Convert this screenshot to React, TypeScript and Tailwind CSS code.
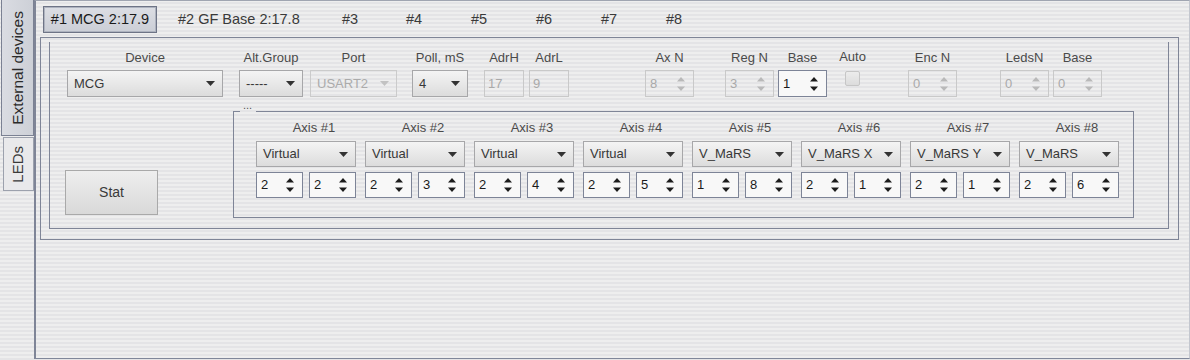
import clsx from 'clsx'
import type { ReactNode } from 'react'

const STRIPES =
  'bg-fixed bg-[image:repeating-linear-gradient(to_bottom,#eeeeee_0px,#eeeeee_2px,#e4e4e6_2px,#e4e4e6_4px)]'

const LINE = 'border-[#7f8597]'

type Axis = { kind: string; a: string; b: string }

const axes: Axis[] = [
  { kind: 'Virtual', a: '2', b: '2' },
  { kind: 'Virtual', a: '2', b: '3' },
  { kind: 'Virtual', a: '2', b: '4' },
  { kind: 'Virtual', a: '2', b: '5' },
  { kind: 'V_MaRS', a: '1', b: '8' },
  { kind: 'V_MaRS X', a: '2', b: '1' },
  { kind: 'V_MaRS Y', a: '2', b: '1' },
  { kind: 'V_MaRS', a: '2', b: '6' },
]

function DownArrow({ disabled }: { disabled?: boolean }) {
  return (
    <svg width="9" height="5" viewBox="0 0 9 5" className="shrink-0">
      <polygon points="0,0 9,0 4.5,5" fill={disabled ? '#c2c2c2' : '#333333'} />
    </svg>
  )
}

function SpinArrows({ disabled }: { disabled?: boolean }) {
  const fill = disabled ? '#b9b9b9' : '#1c1c1c'
  return (
    <svg width="8" height="14" viewBox="0 0 8 14" className="shrink-0">
      <polygon points="4,0 8,4.5 0,4.5" fill={fill} />
      <polygon points="0,9.5 8,9.5 4,14" fill={fill} />
    </svg>
  )
}

type BoxProps = { value: string; className?: string; disabled?: boolean }

function Combo({ value, className, disabled }: BoxProps) {
  return (
    <div
      className={clsx(
        'flex items-center justify-between border pl-[6px] pr-[7px] text-[13px]',
        disabled
          ? 'border-[#cbcbcb] text-[#ababab]'
          : 'border-[#a7a7a9] text-[#383838] bg-[image:linear-gradient(to_bottom,#f4f4f4,#dcdcdc)]',
        className,
      )}
    >
      <span className="whitespace-nowrap">{value}</span>
      <DownArrow disabled={disabled} />
    </div>
  )
}

function Spinner({ value, className, disabled }: BoxProps) {
  return (
    <div
      className={clsx(
        'flex items-center justify-between border pl-[4px] pr-[8px] text-[13px]',
        disabled ? 'border-[#c9c9c9] text-[#a9a9a9]' : 'border-[#7d8497] bg-[#f8f8f8] text-[#1a1a1a]',
        className,
      )}
    >
      <span>{value}</span>
      <SpinArrows disabled={disabled} />
    </div>
  )
}

function TextBox({ value, className }: BoxProps) {
  return (
    <div className={clsx('flex items-center border border-[#c9c9c9] pl-[3px] text-[13px] text-[#a9a9a9]', className)}>
      {value}
    </div>
  )
}

function Field({ label, className, children }: { label: string; className: string; children: ReactNode }) {
  return (
    <div className={clsx('flex shrink-0 flex-col items-center', className)}>
      <span className="h-[16px] whitespace-nowrap text-[13px] leading-[16px] text-[#4a4a4a]">{label}</span>
      <div className="mt-[4px] w-full">{children}</div>
    </div>
  )
}

function TopRow() {
  return (
    <div className="flex">
      <Field label="Device" className="ml-[17px] w-[156px]">
        <Combo value="MCG" className="h-[27px]" />
      </Field>
      <Field label="Alt.Group" className="ml-[16px] w-[64px]">
        <Combo value="-----" className="h-[27px]" />
      </Field>
      <Field label="Port" className="ml-[7px] w-[87px]">
        <Combo value="USART2" disabled className="h-[27px] pl-[4px]" />
      </Field>
      <Field label="Poll, mS" className="ml-[15px] w-[56px]">
        <Combo value="4" className="h-[27px]" />
      </Field>
      <Field label="AdrH" className="ml-[16px] w-[40px]">
        <TextBox value="17" className="h-[27px]" />
      </Field>
      <Field label="AdrL" className="ml-[5px] w-[40px]">
        <TextBox value="9" className="h-[27px]" />
      </Field>
      <Field label="Ax N" className="ml-[76px] w-[49px]">
        <Spinner value="8" disabled className="h-[27px]" />
      </Field>
      <Field label="Reg N" className="ml-[31px] w-[49px]">
        <Spinner value="3" disabled className="h-[27px]" />
      </Field>
      <Field label="Base" className="ml-[4px] w-[49px]">
        <Spinner value="1" className="h-[27px]" />
      </Field>
      <div className="ml-[18px] flex w-[15px] shrink-0 flex-col items-center">
        <span className="-mt-[1px] h-[17px] whitespace-nowrap text-[13px] leading-[16px] text-[#4a4a4a]">Auto</span>
        <div className="mt-[5px] h-[15px] w-[15px] rounded-[2px] border border-[#c6c6c6] bg-[image:linear-gradient(to_bottom,#ececec,#dcdcdc)]" />
      </div>
      <Field label="Enc N" className="ml-[48px] w-[49px]">
        <Spinner value="0" disabled className="h-[27px]" />
      </Field>
      <Field label="LedsN" className="ml-[43px] w-[49px]">
        <Spinner value="0" disabled className="h-[27px]" />
      </Field>
      <Field label="Base" className="ml-[4px] w-[49px]">
        <Spinner value="0" disabled className="h-[27px]" />
      </Field>
    </div>
  )
}

function AxisPanel() {
  return (
    <div className={clsx('relative ml-[75px] h-[107px] w-[901px] shrink-0 border pt-[8px] pl-[22px]', LINE)}>
      <span
        className={clsx(
          'absolute -top-[12px] left-[6px] h-[12px] w-[16px] pl-[3px] text-[11px] leading-[11px] text-[#555]',
          STRIPES,
        )}
      >
        ...
      </span>
      <div className="flex gap-[9px]">
        {axes.map((axis, i) => (
          <div key={i} className="flex w-[100px] shrink-0 flex-col">
            <span className="h-[16px] pl-[16px] text-center text-[13px] leading-[16px] text-[#4a4a4a]">
              Axis #{i + 1}
            </span>
            <Combo value={axis.kind} className="mt-[5px] h-[26px]" />
            <div className="mt-[5px] flex gap-[6px]">
              <Spinner value={axis.a} className="h-[26px] w-[47px]" />
              <Spinner value={axis.b} className="h-[26px] w-[47px]" />
            </div>
          </div>
        ))}
      </div>
    </div>
  )
}

export default function App() {
  return (
    <div className={clsx("flex h-[360px] w-[1190px] overflow-hidden font-['Liberation_Sans',Arial,sans-serif]", STRIPES)}>
      {/* vertical tabs */}
      <div className="flex w-[34px] shrink-0 flex-col">
        <div className="ml-[1px] flex h-[136px] w-[33px] items-center justify-center border-x border-b border-[#7b8193] bg-[image:linear-gradient(to_right,#dadce2,#cdd0d7)]">
          <span className="rotate-180 whitespace-nowrap text-[15.5px] text-[#2a2a2a] [writing-mode:vertical-rl]">
            External devices
          </span>
        </div>
        <div className="ml-[3px] mt-[1px] flex h-[54px] w-[31px] items-center justify-center border border-[#9ca1ad] bg-[#e9e9eb]">
          <span className="rotate-180 whitespace-nowrap text-[15px] text-[#3a3a3a] [writing-mode:vertical-rl]">LEDs</span>
        </div>
      </div>

      {/* main panel */}
      <div className="flex h-[359px] flex-1 flex-col border-y border-r border-l-2 border-t-[#a0a5b1] border-r-[#c3c7cf] border-b-[#80879a] border-l-[#7f8597]">
        <div className="flex h-[36px] items-start text-[14.5px] text-[#3a3a3a]">
          <div className="ml-[7px] mt-[5px] flex h-[27px] w-[114px] items-center justify-center border border-[#6e7486] bg-[image:linear-gradient(to_bottom,#dcdee4,#cbced6)] text-[#1a1a1a] shadow-[inset_0_0_0_1px_#aeb3bf]">
            #1 MCG 2:17.9
          </div>
          <span className="ml-[21px] mt-[5px] flex h-[27px] w-[164px] items-center whitespace-nowrap">#2 GF Base 2:17.8</span>
          <span className="mt-[5px] flex h-[27px] w-[64px] items-center">#3</span>
          <span className="mt-[5px] flex h-[27px] w-[65px] items-center">#4</span>
          <span className="mt-[5px] flex h-[27px] w-[65px] items-center">#5</span>
          <span className="mt-[5px] flex h-[27px] w-[65px] items-center">#6</span>
          <span className="mt-[5px] flex h-[27px] w-[65px] items-center">#7</span>
          <span className="mt-[5px] flex h-[27px] w-[65px] items-center">#8</span>
        </div>

        <div className={clsx('ml-[4px] h-[203px] w-[1139px] border', LINE)}>
          <div className={clsx('ml-[8px] mt-[4px] h-[187px] w-[1120px] border-x border-b pt-[8px]', LINE)}>
            <TopRow />
            <div className="mt-[14px] flex items-start">
              <button className="ml-[15px] mt-[59px] h-[45px] w-[93px] shrink-0 border border-[#a9a9a9] bg-[image:linear-gradient(to_bottom,#eeeeee,#d9d9d9)] text-[14px] text-[#3a3a3a]">
                Stat
              </button>
              <AxisPanel />
            </div>
          </div>
        </div>
      </div>
    </div>
  )
}
